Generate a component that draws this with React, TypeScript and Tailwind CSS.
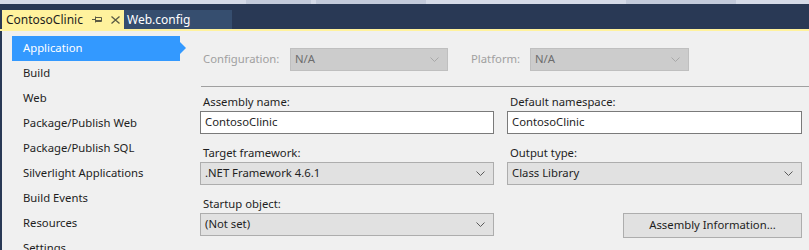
const navItems = [
  'Application',
  'Build',
  'Web',
  'Package/Publish Web',
  'Package/Publish SQL',
  'Silverlight Applications',
  'Build Events',
  'Resources',
  'Settings',
];

function Chevron({ disabled }: { disabled?: boolean }) {
  return (
    <svg width="9" height="5" viewBox="0 0 9 5" className="shrink-0">
      <path d="M0.5 0.5 L4.5 4.5 L8.5 0.5" fill="none" stroke={disabled ? '#a8a8a8' : '#5a5a5a'} strokeWidth="1" />
    </svg>
  );
}

function Combo({ value, disabled, className }: { value: string; disabled?: boolean; className: string }) {
  return (
    <div
      className={`flex items-center justify-between h-[23px] pl-[4px] pr-[8px] border ${
        disabled ? 'bg-[#cccccc] border-[#bfbfbf] text-[#6d6d6d]' : 'bg-[#e1e1e1] border-[#adadad] text-[#1e1e1e]'
      } ${className}`}
    >
      <span>{value}</span>
      <Chevron disabled={disabled} />
    </div>
  );
}

function TextBox({ value, className }: { value: string; className: string }) {
  return (
    <div className={`flex items-center h-[23px] pl-[4px] bg-white border border-[#7a7a7a] text-[#1e1e1e] ${className}`}>
      {value}
    </div>
  );
}

function Label({ children }: { children: string }) {
  return <div className="h-[17px] pl-[3px] leading-[17px] text-[#1e1e1e]">{children}</div>;
}

export default function App() {
  return (
    <div
      className="w-[809px] h-[250px] overflow-hidden flex flex-col bg-[#293955] text-[11.3px]"
      style={{ fontFamily: '"Noto Sans", "Open Sans", sans-serif' }}
    >
      <div className="h-[4px] shrink-0 flex bg-[#d5dbe8]">
        <div className="w-[246px]" />
        <div className="w-[65px] bg-[#c3cbdb]" />
        <div className="w-[5px]" />
        <div className="w-[110px] bg-[#c3cbdb]" />
        <div className="w-[200px]" />
        <div className="w-[110px] bg-[#c3cbdb]" />
      </div>

      <div className="h-[25px] shrink-0 flex items-end pl-[2px]">
        <div className="h-[19px] w-[122px] flex items-center pl-[4px] bg-[#fff29d] text-[#1e1e1e] text-[12px]">
          <span>ContosoClinic</span>
          <svg width="10" height="7" viewBox="0 0 10 7" className="ml-[9px]">
            <path d="M0 3.5 H3.5 M3.5 0.5 V6.5 M3.5 1.5 H9.5 V5.5 H3.5 M3.5 4.5 H9.5" fill="none" stroke="#5a5a44" strokeWidth="1" />
          </svg>
          <svg width="9" height="8" viewBox="0 0 9 8" className="ml-[9px]">
            <path d="M0.5 0.5 L8.5 7.5 M8.5 0.5 L0.5 7.5" fill="none" stroke="#5a5a44" strokeWidth="1.3" />
          </svg>
        </div>
        <div className="h-[19px] w-[108px] flex items-center pl-[3px] bg-[#364e6f] text-white text-[12px]">Web.config</div>
      </div>

      <div className="h-[2px] shrink-0 bg-[#fff29d]" />

      <div className="flex-1 min-h-0 overflow-hidden flex ml-[2px] bg-[#f0f0f0]">
        <div className="w-[198px] shrink-0 pt-[5px]">
          {navItems.map((item, i) =>
            i === 0 ? (
              <div key={item} className="relative ml-[10px] w-[168px] h-[25px] flex items-center pl-[11px] bg-[#3399ff] text-white">
                {item}
                <div className="absolute right-[-6px] top-[6px] w-0 h-0 border-y-[6px] border-y-transparent border-l-[6px] border-l-[#3399ff]" />
              </div>
            ) : (
              <div key={item} className="ml-[10px] h-[25px] flex items-center pl-[11px] text-[#1e1e1e]">
                {item}
              </div>
            )
          )}
        </div>

        <div className="flex-1 flex flex-col">
          <div className="mt-[17px] flex items-center h-[23px]">
            <span className="w-[90px] pl-[3px] text-[#a0a0a0]">Configuration:</span>
            <Combo value="N/A" disabled className="w-[158px]" />
            <span className="ml-[23px] w-[59px] text-[#a0a0a0]">Platform:</span>
            <Combo value="N/A" disabled className="w-[159px]" />
          </div>

          <div className="mt-[15px] ml-[1px] h-px bg-[#a0a0a0]" />

          <div className="mt-[6px] grid grid-cols-[294px_295px] gap-x-[13px]">
            <div>
              <Label>Assembly name:</Label>
              <TextBox value="ContosoClinic" className="mt-[1px]" />
            </div>
            <div>
              <Label>Default namespace:</Label>
              <TextBox value="ContosoClinic" className="mt-[1px]" />
            </div>

            <div className="mt-[10px]">
              <Label>Target framework:</Label>
              <Combo value=".NET Framework 4.6.1" className="mt-[1px]" />
            </div>
            <div className="mt-[10px]">
              <Label>Output type:</Label>
              <Combo value="Class Library" className="mt-[1px]" />
            </div>

            <div className="mt-[10px]">
              <Label>Startup object:</Label>
              <Combo value="(Not set)" className="mt-[1px]" />
            </div>
            <div className="mt-[10px] flex items-start justify-end pt-[18px]">
              <button className="w-[179px] h-[25px] bg-[#e1e1e1] border border-[#adadad] text-[#1e1e1e]">
                Assembly Information...
              </button>
            </div>
          </div>
        </div>
      </div>
    </div>
  );
}
